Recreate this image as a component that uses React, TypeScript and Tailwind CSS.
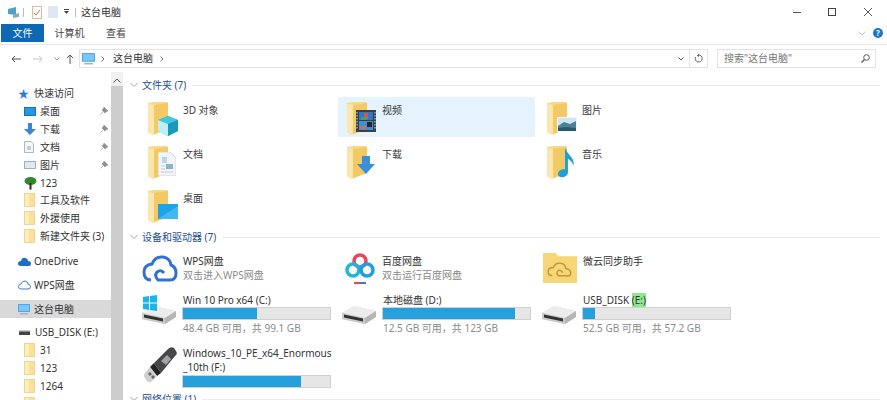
import React from "react";

const FONT = "font-['Noto_Sans','Noto_Sans_CJK_SC',sans-serif]";

function Folder() {
  return (
    <svg width="20" height="33" viewBox="0 0 20 33" className="shrink-0">
      <path d="M0 1 L6 0 H19 L20 1 V27 L5 33 L0 30 Z" fill="#f7d987" />
      <path d="M6 3 L20 1 V27 L6 32 Z" fill="#f3c963" />
      <path d="M0 2 L6 3 V33 L0 30 Z" fill="#fbe6ae" />
    </svg>
  );
}

function SmallFolder() {
  return (
    <svg width="11" height="14" viewBox="0 0 11 14" className="shrink-0">
      <rect x="0.5" y="0.5" width="10" height="13" fill="#fde098" stroke="#f2d48e" />
      <rect x="1" y="1" width="4" height="12" fill="#ffeebd" />
    </svg>
  );
}

function Overlay({ kind }: { kind: string }) {
  if (kind === "3d")
    return (
      <svg width="20" height="20" viewBox="0 0 20 20">
        <path d="M10 0 L20 4 V15 L10 20 L0 15 V4 Z" fill="#23b2d6" />
        <path d="M0 4 L10 8 L20 4 L10 0 Z" fill="#43c6e0" />
        <path d="M0 4 L10 8 V20 L0 15 Z" fill="#bff0f2" />
        <path d="M10 8 L20 4 V15 L10 20 Z" fill="#1998c0" />
      </svg>
    );
  if (kind === "video")
    return (
      <svg width="20" height="22" viewBox="0 0 20 22">
        <rect width="20" height="22" fill="#3a3f46" />
        <rect x="3" y="2" width="14" height="8" fill="#2f77c8" />
        <rect x="3" y="11" width="14" height="9" fill="#3f8fd8" />
        <rect x="8" y="3" width="4" height="6" fill="#d9534f" />
        <rect x="5" y="7" width="6" height="3" fill="#3da35d" />
        <rect x="11" y="12" width="5" height="5" fill="#22262b" />
        <rect x="4" y="16" width="6" height="3" fill="#cf6f4f" />
        <path d="M1 2V20M19 2V20" stroke="#d7dbe0" strokeWidth="1" strokeDasharray="1.5 1.5" />
      </svg>
    );
  if (kind === "pic")
    return (
      <svg width="20" height="15" viewBox="0 0 20 15">
        <rect width="20" height="15" fill="#f3f6f8" />
        <rect x="1" y="1" width="18" height="13" fill="#cfe6f2" />
        <path d="M1 9 L7 5 L13 7 L19 4 V14 H1 Z" fill="#4c8097" />
        <path d="M1 11 L9 10 L19 11 V14 H1 Z" fill="#285a6e" />
      </svg>
    );
  if (kind === "doc")
    return (
      <svg width="18" height="24" viewBox="0 0 18 24">
        <path d="M0 0 H12 L18 6 V24 H0 Z" fill="#f2f4f6" stroke="#d5dae0" />
        <rect x="4" y="5" width="5" height="6" fill="#b8d6ee" />
        <rect x="8" y="12" width="7" height="5" fill="#8fb2c8" />
        <path d="M3 14H7M3 17H7M3 20H15" stroke="#c4ccd4" />
      </svg>
    );
  if (kind === "down")
    return (
      <svg width="18" height="18" viewBox="0 0 18 18">
        <path d="M5 0 H13 V8 H18 L9 18 L0 8 H5 Z" fill="#3a8fdc" />
      </svg>
    );
  if (kind === "music")
    return (
      <svg width="18" height="29" viewBox="0 0 18 30">
        <path d="M9 0 C10 6 18 8 17 17 C15 13 13 11 11 10 V24 C11 28 6 30 3 29 C0 28 0 24 3 22 C5 21 7 21 8 21 V0 Z" fill="#1e9fd8" />
      </svg>
    );
  return (
    <svg width="20" height="15" viewBox="0 0 20 15">
      <rect width="20" height="15" fill="#1fa3e8" />
      <path d="M0 15 L20 2 V15 Z" fill="#42b8f2" />
    </svg>
  );
}

function FolderIcon({ kind }: { kind: string }) {
  const pos: Record<string, string> = {
    "3d": "left-[10px] top-[14px]",
    video: "left-[9px] top-[8px]",
    pic: "left-[10px] top-[15px]",
    doc: "left-[10px] top-[6px]",
    down: "left-[10px] top-[10px]",
    music: "left-[10px] top-[3px]",
    desk: "left-[10px] top-[14px]",
  };
  return (
    <div className="relative w-[30px] h-[34px] shrink-0">
      <Folder />
      <div className={`absolute ${pos[kind]} flex`}>
        <Overlay kind={kind} />
      </div>
    </div>
  );
}

function FolderTile({ name, kind, hl, col3 }: { name: string; kind: string; hl?: boolean; col3?: boolean }) {
  return (
    <div className={`h-[40px] flex gap-[5px] pt-[5px] ${col3 ? "pl-[12px]" : "pl-[9px]"} ${hl ? "bg-[#e5f3fd]" : ""}`}>
      <FolderIcon kind={kind} />
      <span className="text-[10px] leading-[14px] text-[#3a3a3a] mt-[1px]">{name}</span>
    </div>
  );
}

function HDD({ win }: { win?: boolean }) {
  return (
    <svg width="34" height="34" viewBox="0 0 34 34" className="shrink-0">
      <path d="M0 20 L12 13 L34 18 V24 L23 31 L0 26 Z" fill="#dedede" />
      <path d="M0 20 L12 13 L34 18 L23 25 Z" fill="#ececec" />
      <path d="M0 20 L23 25 V31 L0 26 Z" fill="#c9c9c9" />
      <path d="M2 21.500 L21 25.500 V28.500 L2 24.500 Z" fill="#333" />
      <path d="M23 25 L34 18 V24 L23 31 Z" fill="#b5b5b5" />
      {win && <path d="M1 4 L7 3 V9.500 H1 Z M8 3 L15 2 V9.500 H8 Z M1 10.500 H7 V17 L1 16 Z M8 10.500 H15 V18 L8 17 Z" fill="#19b4e8" />}
    </svg>
  );
}

function USB() {
  return (
    <svg width="36" height="38" viewBox="0 0 36 38" className="shrink-0">
      <path d="M12 17 L26 3 Q29 0 32 2 L34 5 Q36 8 33 10 L19 27 Z" fill="#47474a" />
      <path d="M19 15 L25 9 L29 13 L24 19 Z" fill="#a3a3a3" />
      <path d="M12 17 L19 27 L15 30 L8 21 Z" fill="#222224" />
      <path d="M8 21 L15 30 L9 36 Q7 37 5 35 L2 31 Q1 29 3 27 Z" fill="#cfcfcf" />
      <path d="M6 28 L8 26 L10 28 L8 30 Z M9 31 L11 29 L13 31 L11 33 Z" fill="#666" />
    </svg>
  );
}

function Bar({ pct }: { pct: number }) {
  return (
    <div className="w-[149px] h-[13px] bg-[#e6e6e6] border border-[#d0d0d0]">
      <div className="h-full bg-[#26a0da]" style={{ width: `${pct}%` }} />
    </div>
  );
}

function Drive({ icon, name, free, pct, pl }: { icon: React.ReactNode; name: React.ReactNode; free: string; pct: number; pl: string }) {
  return (
    <div className={`h-[44px] flex items-start gap-[6px] ${pl}`}>
      <div className="w-[34px] shrink-0 flex">{icon}</div>
      <div className="w-[149px]">
        <div className="text-[10px] leading-[14px] text-[#333] h-[14px] whitespace-nowrap pl-[1px]">{name}</div>
        <Bar pct={pct} />
        <div className="text-[10px] leading-[14px] text-[#8a8a8a] mt-[1px] whitespace-nowrap pl-[1px]">{free}</div>
      </div>
    </div>
  );
}

function Section({ title }: { title: string }) {
  return (
    <div className="h-[14px] flex items-center gap-[4px]">
      <svg width="8" height="6" viewBox="0 0 8 6" className="shrink-0">
        <path d="M0.5 1 L4 4.500 L7.500 1" fill="none" stroke="#9aa3ad" />
      </svg>
      <span className="text-[10px] text-[#1e4f8e] whitespace-nowrap leading-none">{title}</span>
      <div className="flex-1 h-px bg-[#e6ebf0] ml-[2px]" />
    </div>
  );
}

function Nav({ icon, label, pin, cls = "", indent = "pl-[24px]" }: { icon?: React.ReactNode; label: string; pin?: boolean; cls?: string; indent?: string }) {
  return (
    <div className={`h-[18px] flex items-center ${indent} ${cls} text-[10px] text-[#333] whitespace-nowrap`}>
      <div className="w-[16px] flex items-center shrink-0">{icon}</div>
      <span>{label}</span>
      {pin && (
        <svg width="8" height="8" viewBox="0 0 8 8" className="ml-auto mr-[3px]">
          <path d="M4 0 L8 4 L6.500 4.500 L5 6 L2 3 L3.500 1.500 Z M3 5 L0.500 7.500" fill="#8f8f8f" stroke="#8f8f8f" strokeWidth="0.6" />
        </svg>
      )}
    </div>
  );
}

function Monitor({ w = 12 }: { w?: number }) {
  return (
    <svg width={w} height={w} viewBox="0 0 12 12">
      <rect x="0" y="1" width="12" height="8" fill="#4aa8e8" />
      <rect x="1" y="2" width="10" height="6" fill="#7cc8f4" />
      <rect x="2" y="10" width="8" height="1.500" fill="#9fb4c4" />
    </svg>
  );
}

export default function App() {
  return (
    <div className={`w-[887px] h-[400px] overflow-hidden bg-white flex flex-col ${FONT}`}>
      {/* title bar */}
      <div className="h-[24px] flex items-center pl-[8px] shrink-0">
        <svg width="12" height="12" viewBox="0 0 12 12">
          <path d="M0 3 L8 1 V9 L0 8 Z" fill="#4f9fc8" />
          <path d="M5 9 L11 7 V11 L5 12 Z" fill="#8fa8b8" />
        </svg>
        <div className="w-px h-[9px] bg-[#bbb] ml-[3px]" />
        <svg width="10" height="13" viewBox="0 0 10 13" className="ml-[8px]">
          <rect x="0.500" y="0.500" width="9" height="12" fill="#fff" stroke="#e2b9a0" />
          <path d="M2 7 L4 9 L8 4" fill="none" stroke="#d76a4a" />
        </svg>
        <div className="w-[10px] h-[12px] bg-[#dfe7f3] ml-[6px]" />
        <svg width="6" height="6" viewBox="0 0 6 6" className="ml-[6px]">
          <path d="M0 0.500 H5" stroke="#444" />
          <path d="M0 2 H5 L2.500 5 Z" fill="#444" />
        </svg>
        <div className="w-px h-[9px] bg-[#bbb] ml-[5px]" />
        <span className="text-[10px] text-[#333] ml-[5px]">这台电脑</span>
        <div className="ml-auto flex items-center">
          <div className="w-[8px] h-px bg-[#555] mr-[27px]" />
          <div className="w-[8px] h-[8px] border border-[#444] mr-[28px]" />
          <svg width="8" height="8" viewBox="0 0 8 8" className="mr-[15px]">
            <path d="M0 0 L8 8 M8 0 L0 8" stroke="#444" strokeWidth="0.9" />
          </svg>
        </div>
      </div>
      {/* tabs */}
      <div className="h-[21px] flex items-stretch border-b border-[#e8e8e8] shrink-0 text-[10px] text-[#444]">
        <div className="w-[43px] ml-[1px] mb-[2px] bg-[#0f68b4] text-white flex items-center justify-center">文件</div>
        <div className="w-[51px] mb-[2px] flex items-center justify-center">计算机</div>
        <div className="w-[42px] mb-[2px] flex items-center justify-center">查看</div>
        <div className="ml-auto flex items-center mr-[4px] mb-[2px]">
          <svg width="8" height="5" viewBox="0 0 8 5" className="mr-[7px]">
            <path d="M0.500 0.500 L4 4 L7.500 0.500" fill="none" stroke="#c3c3c3" />
          </svg>
          <div className="w-[10px] h-[10px] rounded-full bg-[#1976c9] text-white text-[8px] font-bold flex items-center justify-center leading-none">?</div>
        </div>
      </div>
      {/* address */}
      <div className="h-[21px] flex items-center shrink-0 mt-[3px] text-[#555]">
        <svg width="10" height="8" viewBox="0 0 10 8" className="ml-[11px]">
          <path d="M10 4 H1 M4 1 L1 4 L4 7" fill="none" stroke="#555" />
        </svg>
        <svg width="10" height="8" viewBox="0 0 10 8" className="ml-[12px]">
          <path d="M0 4 H9 M6 1 L9 4 L6 7" fill="none" stroke="#c9c9c9" />
        </svg>
        <svg width="6" height="4" viewBox="0 0 6 4" className="ml-[11px]">
          <path d="M0.500 0.500 L3 3 L5.500 0.500" fill="none" stroke="#999" />
        </svg>
        <svg width="8" height="10" viewBox="0 0 8 10" className="ml-[6px]">
          <path d="M4 10 V1 M1 4 L4 1 L7 4" fill="none" stroke="#555" />
        </svg>
        <div className="w-[629px] h-[19px] border border-[#e3e3e3] ml-[5px] flex items-center text-[10px] text-[#333]">
          <span className="ml-[2px] flex"><Monitor w={13} /></span>
          <svg width="4" height="6" viewBox="0 0 4 6" className="ml-[6px]"><path d="M0.500 0.500 L3 3 L0.500 5.500" fill="none" stroke="#777" /></svg>
          <span className="ml-[8px]">这台电脑</span>
          <svg width="4" height="6" viewBox="0 0 4 6" className="ml-[7px]"><path d="M0.500 0.500 L3 3 L0.500 5.500" fill="none" stroke="#777" /></svg>
          <svg width="6" height="4" viewBox="0 0 6 4" className="ml-auto mr-[5px]"><path d="M0.500 0.500 L3 3 L5.500 0.500" fill="none" stroke="#555" /></svg>
          <div className="w-px h-full bg-[#e3e3e3]" />
          <svg width="9" height="9" viewBox="0 0 9 9" className="mx-[4px]">
            <path d="M4.500 1 A3.500 3.500 0 1 1 1.500 3 M4.500 0 V2.500 L3 1.200" fill="none" stroke="#666" />
          </svg>
        </div>
        <div className="w-[159px] h-[19px] border border-[#e3e3e3] ml-[9px] flex items-center text-[10px] text-[#777] pl-[6px]">
          搜索"这台电脑"
          <svg width="9" height="9" viewBox="0 0 9 9" className="ml-auto mr-[5px]">
            <circle cx="5.500" cy="3.500" r="2.800" fill="none" stroke="#555" />
            <path d="M3.500 5.500 L0.500 8.500" stroke="#555" strokeWidth="1.200" />
          </svg>
        </div>
      </div>
      <div className="h-[3px] shrink-0" />
      {/* body */}
      <div className="flex flex-1 min-h-0">
        <div className="w-[111px] shrink-0 pt-[12px]">
          <Nav indent="pl-[18px]" icon={<span className="text-[#2b7cd3] text-[11px] leading-none">★</span>} label="快速访问" />
          <Nav icon={<div className="w-[12px] h-[9px] bg-[#1f9be6] border border-[#1b6fb5]" />} label="桌面" pin />
          <Nav icon={<svg width="12" height="12" viewBox="0 0 12 12"><path d="M4 0 H8 V6 H12 L6 12 L0 6 H4 Z" fill="#3a86d4" /></svg>} label="下载" pin />
          <Nav icon={<svg width="10" height="12" viewBox="0 0 10 12"><path d="M0.500 0.500 H7 L9.500 3 V11.500 H0.500 Z" fill="#f4f6f8" stroke="#a9b8c6" /><path d="M3 6H7M3 8H7" stroke="#8aa" /></svg>} label="文档" pin />
          <Nav icon={<div className="w-[12px] h-[8px] bg-[#dfe9f0] border border-[#9fb0bc]" />} label="图片" pin />
          <Nav icon={<svg width="13" height="13" viewBox="0 0 13 13"><ellipse cx="6.500" cy="4" rx="6" ry="4" fill="#2f8a2f" /><path d="M5.500 6 H7.500 V12.500 H5.500 Z" fill="#3a2a1a" /></svg>} label="123" />
          <div className="-mt-[1px]"><Nav icon={<SmallFolder />} label="工具及软件" /></div>
          <Nav icon={<SmallFolder />} label="外援使用" />
          <Nav icon={<SmallFolder />} label="新建文件夹 (3)" />
          <div className="h-[7px]" />
          <Nav indent="pl-[18px]" icon={<svg width="13" height="9" viewBox="0 0 13 9"><path d="M3 9 Q0 9 0 6.500 Q0 4 3 4 Q4 0 7.500 1 Q10 1.500 10 4 Q13 4 13 6.500 Q13 9 10.500 9 Z" fill="#1c6fc4" /></svg>} label="OneDrive" />
          <div className="h-[6px]" />
          <Nav indent="pl-[18px]" icon={<svg width="13" height="10" viewBox="0 0 13 10"><path d="M3 9 Q0.500 9 0.500 6.500 Q0.500 4.500 3 4 Q4 1 7 1 Q10 1.500 10 4 Q12.500 4.500 12.500 6.500 Q12.500 9 10 9 Z" fill="none" stroke="#3b7fcc" /></svg>} label="WPS网盘" />
          <div className="h-[6px]" />
          <Nav indent="pl-[18px]" cls="bg-[#d9d9d9]" icon={<Monitor />} label="这台电脑" />
          <div className="h-[5px]" />
          <Nav indent="pl-[19px]" icon={<svg width="11" height="6" viewBox="0 0 11 6"><path d="M1 1 H10 L11 3 V6 H0 V3 Z" fill="#444" /><path d="M1 1 H10 L10.500 2.500 H0.500 Z" fill="#ccc" /></svg>} label="USB_DISK (E:)" />
          <Nav icon={<SmallFolder />} label="31" />
          <Nav icon={<SmallFolder />} label="123" />
          <Nav icon={<SmallFolder />} label="1264" />
          <Nav icon={<SmallFolder />} label="" />
        </div>
        {/* scrollbar */}
        <div className="w-[12px] shrink-0 bg-[#f0f0f0] relative">
          <svg width="8" height="5" viewBox="0 0 8 5" className="absolute left-[2px] top-[6px]">
            <path d="M0.500 4.500 L4 1 L7.500 4.500" fill="none" stroke="#555" />
          </svg>
          <div className="absolute left-0 right-0 top-[14px] bottom-0 bg-[#cdcdcd]" />
        </div>
        {/* content */}
        <div className="flex-1 min-w-0 pl-[7px] pr-[7px] pt-[6px]">
          <Section title="文件夹 (7)" />
          <div className="grid grid-cols-[199px_197px_1fr] gap-y-[4px] mt-[5px] ml-[9px]">
            <FolderTile name="3D 对象" kind="3d" />
            <FolderTile name="视频" kind="video" hl />
            <FolderTile name="图片" kind="pic" col3 />
            <FolderTile name="文档" kind="doc" />
            <FolderTile name="下载" kind="down" />
            <FolderTile name="音乐" kind="music" col3 />
            <FolderTile name="桌面" kind="desk" />
          </div>
          <div className="mt-[5px]"><Section title="设备和驱动器 (7)" /></div>
          <div className="grid grid-cols-[199px_197px_1fr] mt-[6px] ml-[9px]">
            <div className="h-[43px] flex gap-[5px] pl-[3px]">
              <svg width="36" height="30" viewBox="0 0 36 30" className="mt-[4px] shrink-0">
                <path d="M9 26 Q2 26 2 18 Q2 11 10 10 Q13 2 21 3 Q28 4 29 11 Q34 13 34 19 Q34 26 28 26 L16 26 Q12 22 15 18 Q19 15 22 19" fill="none" stroke="#2f72d0" strokeWidth="3" />
              </svg>
              <div>
                <div className="text-[10px] leading-[14px] text-[#333] mt-[4px]">WPS网盘</div>
                <div className="text-[10px] leading-[14px] text-[#8a8a8a]">双击进入WPS网盘</div>
              </div>
            </div>
            <div className="h-[43px] flex gap-[7px] pl-[7px]">
              <svg width="30" height="34" viewBox="0 0 30 34" className="mt-[2px] shrink-0">
                <circle cx="15" cy="9" r="6" fill="none" stroke="#e8465a" strokeWidth="3.500" />
                <circle cx="8" cy="18" r="6" fill="none" stroke="#1fb6d8" strokeWidth="3.500" />
                <circle cx="22" cy="18" r="6" fill="none" stroke="#1f9fe0" strokeWidth="3.500" />
                <rect x="9" y="30" width="6" height="2" fill="#e8465a" />
                <rect x="15" y="30" width="6" height="2" fill="#3b7fcc" />
              </svg>
              <div>
                <div className="text-[10px] leading-[14px] text-[#333] mt-[4px]">百度网盘</div>
                <div className="text-[10px] leading-[14px] text-[#8a8a8a]">双击运行百度网盘</div>
              </div>
            </div>
            <div className="h-[43px] flex gap-[6px] pl-[8px]">
              <svg width="34" height="30" viewBox="0 0 33 29" className="mt-[3px] shrink-0">
                <path d="M0 0 H12 L15 3 H33 V29 H0 Z" fill="#f7d67a" />
                <path d="M9 22 Q5 22 5 18 Q5 14 10 14 Q12 9 17 10 Q22 11 22 15 Q27 16 27 19 Q27 23 22 22 H15 Q12 19 15 17 Q18 16 19 19" fill="none" stroke="#c09a36" strokeWidth="1.500" />
              </svg>
              <div>
                <div className="text-[10px] leading-[14px] text-[#333] mt-[4px]">微云同步助手</div>
              </div>
            </div>
            <Drive pl="pl-[3px]" icon={<HDD win />} name="Win 10 Pro x64 (C:)" free="48.4 GB 可用，共 99.1 GB" pct={50.5} />
            <Drive pl="pl-[4px]" icon={<HDD />} name="本地磁盘 (D:)" free="12.5 GB 可用，共 123 GB" pct={90} />
            <Drive
              pl="pl-[7px]"
              icon={<HDD />}
              name={<>USB_DISK <span className="bg-[#8fe88f]">(E:)</span></>}
              free="52.5 GB 可用，共 57.2 GB"
              pct={8}
            />
            <div className="flex gap-[4px] pl-[3px] mt-[9px]">
              <USB />
              <div className="w-[149px]">
                <div className="text-[10px] leading-[14px] text-[#333] whitespace-nowrap pl-[1px]">Windows_10_PE_x64_Enormous</div>
                <div className="text-[10px] leading-[14px] text-[#333] pl-[1px]">_10th (F:)</div>
                <div className="mt-[1px]"><Bar pct={80} /></div>
              </div>
            </div>
          </div>
          <div className="mt-[4px]"><Section title="网络位置 (1)" /></div>
        </div>
      </div>
    </div>
  );
}
